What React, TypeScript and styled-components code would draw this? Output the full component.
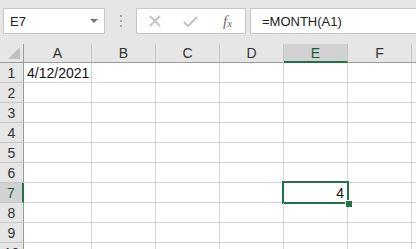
import React from "react";
import styled, { createGlobalStyle, css } from "styled-components";

const GREEN = "#217346";
const GRID = "#d4d4d4";

const Global = createGlobalStyle`
  html, body {
    margin: 0;
    padding: 0;
    background: #fff;
    font-family: "Liberation Sans", Arial, sans-serif;
    overflow: hidden;
  }
`;

const Sheet = styled.div`
  width: 416px;
  height: 249px;
  overflow: hidden;
  background: #fff;
`;

const FormulaBar = styled.div`
  display: flex;
  align-items: flex-start;
  height: 44px;
  box-sizing: border-box;
  padding: 8px 0 0 3px;
  background: #e6e6e6;
`;

const NameBox = styled.div`
  display: flex;
  align-items: center;
  justify-content: space-between;
  width: 102px;
  height: 26px;
  box-sizing: border-box;
  padding: 0 6px 0 6px;
  background: #fff;
  border: 1px solid #c6c6c6;
  font-size: 13px;
  color: #222;
`;

const Caret = styled.span`
  width: 0;
  height: 0;
  border-left: 4px solid transparent;
  border-right: 4px solid transparent;
  border-top: 4px solid #777;
`;

const Grip = styled.div`
  display: flex;
  flex-direction: column;
  gap: 3px;
  width: 2px;
  margin: 7px 14px 0 15px;

  span {
    width: 2px;
    height: 2px;
    background: #a6a6a6;
  }
`;

const Buttons = styled.div`
  display: flex;
  align-items: center;
  width: 110px;
  height: 26px;
  box-sizing: border-box;
  padding: 0 0 0 12px;
  background: #fff;
  border: 1px solid #c6c6c6;
  gap: 22px;
`;

const Fx = styled.span`
  font-family: "Liberation Serif", "Times New Roman", serif;
  font-style: italic;
  font-size: 15px;
  color: #6b6b6b;
  margin-left: 3px;

  sub {
    font-size: 11px;
    vertical-align: -1px;
  }
`;

const Formula = styled.div`
  flex: 1;
  height: 26px;
  box-sizing: border-box;
  margin-left: 4px;
  margin-right: -8px;
  padding: 0 0 0 11px;
  display: flex;
  align-items: center;
  background: #fff;
  border: 1px solid #c6c6c6;
  font-size: 13px;
  color: #222;
`;

const Grid = styled.div`
  display: grid;
  grid-template-columns: 24px 68px 64px 64px 64px 64px 64px 64px;
  grid-template-rows: 19px;
  grid-auto-rows: 20px;
`;

const ColHead = styled.div<{ $active?: boolean }>`
  display: flex;
  align-items: center;
  justify-content: center;
  background: #e6e6e6;
  border-right: 1px solid #c6c6c6;
  border-bottom: 1px solid #9b9b9b;
  font-size: 14px;
  color: #333;
  ${(p) =>
    p.$active &&
    css`
      background: #d2d2d2;
      border-bottom: 2px solid ${GREEN};
      color: #1e5c3a;
    `}
`;

const Corner = styled.div`
  position: relative;
  background: #e6e6e6;
  border-right: 1px solid #9b9b9b;
  border-bottom: 1px solid #9b9b9b;

  &::after {
    content: "";
    position: absolute;
    right: 3px;
    bottom: 3px;
    width: 0;
    height: 0;
    border-left: 12px solid transparent;
    border-bottom: 12px solid #bfbfbf;
  }
`;

const RowHead = styled.div<{ $active?: boolean }>`
  display: flex;
  align-items: center;
  justify-content: center;
  background: #e6e6e6;
  border-right: 1px solid #9b9b9b;
  border-bottom: 1px solid #c6c6c6;
  font-size: 14px;
  color: #333;
  ${(p) =>
    p.$active &&
    css`
      background: #d2d2d2;
      border-right: 2px solid ${GREEN};
      color: #1e5c3a;
    `}
`;

const Cell = styled.div<{ $num?: boolean; $selected?: boolean }>`
  position: relative;
  display: flex;
  align-items: center;
  justify-content: ${(p) => (p.$num ? "flex-end" : "flex-start")};
  padding: 0 3px;
  border-right: 1px solid ${GRID};
  border-bottom: 1px solid ${GRID};
  font-size: 14px;
  color: #111;
  white-space: nowrap;
  ${(p) =>
    p.$selected &&
    css`
      &::after {
        content: "";
        position: absolute;
        top: -2px;
        left: -2px;
        right: -2px;
        bottom: -2px;
        border: 2px solid ${GREEN};
      }
    `}
`;

const FillHandle = styled.span`
  position: absolute;
  right: -5px;
  bottom: -5px;
  width: 6px;
  height: 6px;
  background: ${GREEN};
  border-left: 1px solid #fff;
  border-top: 1px solid #fff;
  z-index: 1;
`;

const cols = ["A", "B", "C", "D", "E", "F", ""];
const values: Record<string, string> = { A1: "4/12/2021", E7: "4" };
const numeric = new Set(["E7"]);

export default function App() {
  return (
    <Sheet>
      <Global />
      <FormulaBar>
        <NameBox>
          E7
          <Caret />
        </NameBox>
        <Grip>
          <span />
          <span />
          <span />
        </Grip>
        <Buttons>
          <svg width="12" height="12" viewBox="0 0 12 12">
            <path d="M1 1L11 11M11 1L1 11" stroke="#c4c4c4" strokeWidth="2" fill="none" />
          </svg>
          <svg width="15" height="11" viewBox="0 0 15 11">
            <path d="M1 6L5 10L14 1" stroke="#c4c4c4" strokeWidth="2.2" fill="none" />
          </svg>
          <Fx>
            f<sub>x</sub>
          </Fx>
        </Buttons>
        <Formula>=MONTH(A1)</Formula>
      </FormulaBar>
      <Grid>
        <Corner />
        {cols.map((c, i) => (
          <ColHead key={i} $active={c === "E"}>
            {c}
          </ColHead>
        ))}
        {Array.from({ length: 10 }, (_, r) => (
          <React.Fragment key={r}>
            <RowHead $active={r + 1 === 7}>{r + 1}</RowHead>
            {cols.map((c, i) => {
              const id = c + (r + 1);
              const sel = id === "E7";
              return (
                <Cell key={i} $num={numeric.has(id)} $selected={sel}>
                  {values[id]}
                  {sel && <FillHandle />}
                </Cell>
              );
            })}
          </React.Fragment>
        ))}
      </Grid>
    </Sheet>
  );
}
